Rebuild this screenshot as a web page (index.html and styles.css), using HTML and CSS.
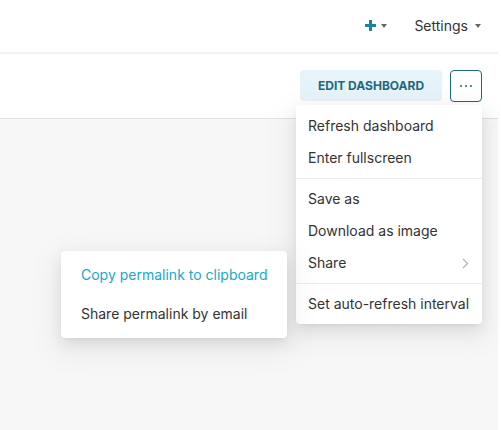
FILE: index.html
```html
<!DOCTYPE html>
<html>
<head>
<meta charset="utf-8">
<link rel="stylesheet" href="styles.css">
</head>
<body>
<div class="page">
  <header class="topnav">
    <div class="nav-item new">
      <svg class="plus" width="11" height="11" viewBox="0 0 11 11"><path d="M5.5 0v11M0 5.5h11" stroke="#1a85a0" stroke-width="3"/></svg>
      <span class="caret"></span>
    </div>
    <div class="nav-item settings">
      <span>Settings</span>
      <span class="caret"></span>
    </div>
  </header>
  <div class="dash-header">
    <button class="edit-btn">EDIT DASHBOARD</button>
    <button class="more-btn"><span class="dot"></span><span class="dot"></span><span class="dot"></span></button>
  </div>
  <main class="main"></main>
</div>

<ul class="menu dropdown">
  <li class="item">Refresh dashboard</li>
  <li class="item">Enter fullscreen</li>
  <li class="divider"></li>
  <li class="item">Save as</li>
  <li class="item">Download as image</li>
  <li class="item share">Share
    <svg class="chev" width="7" height="11" viewBox="0 0 7 11"><path d="M1 1l4.5 4.5L1 10" fill="none" stroke="#b3b3b3" stroke-width="1.2"/></svg>
  </li>
  <li class="divider"></li>
  <li class="item">Set auto-refresh interval</li>
</ul>

<ul class="menu submenu">
  <li class="sub-item active">Copy permalink to clipboard</li>
  <li class="sub-item">Share permalink by email</li>
</ul>
</body>
</html>
```

FILE: styles.css
```css
* { box-sizing: border-box; }
html, body { margin: 0; padding: 0; }
body {
  font-family: Inter, "Noto Sans", "Liberation Sans", sans-serif;
  background: #fff;
  color: #333;
  width: 501px;
  height: 430px;
  overflow: hidden;
  position: relative;
}
.page {
  width: 498px;
  height: 430px;
  display: flex;
  flex-direction: column;
}
.topnav {
  height: 54px;
  border-bottom: 2px solid #f2f2f2;
  display: flex;
  justify-content: flex-end;
  align-items: center;
  padding: 0 17px 2px 0;
  gap: 27px;
}
.nav-item {
  display: flex;
  align-items: center;
  gap: 7px;
  font-size: 14px;
  color: #333;
}
.new { gap: 5px; }
.plus { display: block; }
.caret {
  width: 0;
  height: 0;
  border-left: 3px solid transparent;
  border-right: 3px solid transparent;
  border-top: 4px solid #666;
  margin-top: 1px;
}
.dash-header {
  height: 65px;
  border-bottom: 1px solid #e0e0e0;
  display: flex;
  justify-content: flex-end;
  align-items: center;
  gap: 8px;
  padding: 0 16px 0 0;
}
.edit-btn {
  width: 142px;
  height: 31px;
  border: none;
  border-radius: 4px;
  background: #e6f3f8;
  color: #1d6a7f;
  font-family: Inter, "Noto Sans", sans-serif;
  font-weight: 700;
  font-size: 12px;
  padding: 0;
  margin-top: -1px;
}
.more-btn {
  width: 32px;
  height: 32px;
  border: 1px solid #1d6a7f;
  border-radius: 4px;
  background: #fff;
  display: flex;
  align-items: center;
  justify-content: center;
  gap: 3px;
  padding: 0;
}
.dot {
  width: 2px;
  height: 2px;
  background: #1d6a7f;
  border-radius: 1px;
}
.main {
  flex: 1;
  background: #f7f7f7;
}
.menu {
  position: absolute;
  margin: 0;
  list-style: none;
  background: #fff;
  border-radius: 4px;
  box-shadow: 0 3px 6px -4px rgba(0,0,0,.12), 0 6px 16px 0 rgba(0,0,0,.08), 0 9px 28px 8px rgba(0,0,0,.05);
}
.dropdown {
  left: 296px;
  top: 105px;
  width: 186px;
  padding: 5px 0 4px;
}
.item {
  height: 32px;
  line-height: 32px;
  padding: 0 12px;
  font-size: 14px;
  color: #333;
  white-space: nowrap;
  display: flex;
  align-items: center;
  justify-content: space-between;
}
.chev { margin-right: 1px; }
.divider {
  height: 1px;
  background: #ececec;
  margin: 4px 0;
}
.submenu {
  left: 61px;
  top: 251px;
  width: 226px;
  padding: 4px 0 5px;
}
.sub-item {
  height: 39px;
  line-height: 39px;
  padding: 0 20px;
  font-size: 14px;
  color: #333;
  white-space: nowrap;
}
.sub-item.active { color: #20a7c9; }
```
